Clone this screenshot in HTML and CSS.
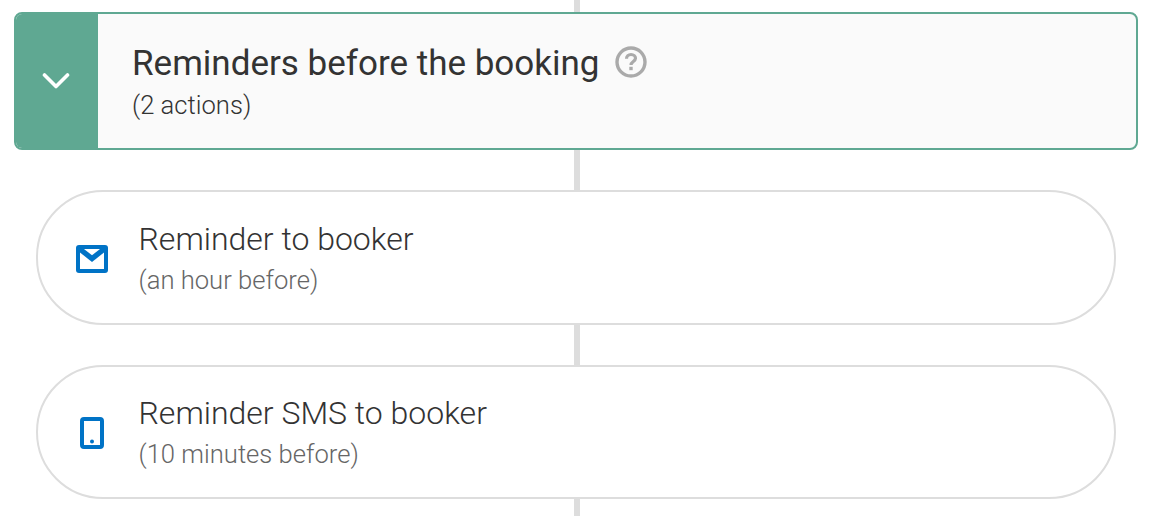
FILE: index.html
```html
<!DOCTYPE html>
<html lang="en">
<head>
<meta charset="utf-8">
<title>Reminders before the booking</title>
<link rel="stylesheet" href="styles.css">
</head>
<body>
<main class="flow">
  <div class="connector connector-top"></div>
  <section class="group">
    <div class="group-toggle">
      <svg class="chevron" width="28" height="18" viewBox="0 0 28 18"><path d="M2.500 3 L14 14.500 L25.500 3" fill="none" stroke="#fff" stroke-width="3.600" stroke-linecap="round" stroke-linejoin="round"/></svg>
    </div>
    <div class="group-text">
      <div class="group-title">
        <span>Reminders before the booking</span>
        <svg class="help" width="34" height="34" viewBox="0 0 34 34"><circle cx="17" cy="17" r="14" fill="none" stroke="#aaa" stroke-width="3.400"/><path d="M12.500 13.800 C12.500 11 14.500 9.500 17 9.500 C19.700 9.500 21.500 11.200 21.500 13.300 C21.500 16.500 17 16.500 17 20" fill="none" stroke="#aaa" stroke-width="3.200"/><rect x="15.300" y="21.800" width="3.400" height="3.400" fill="#aaa"/></svg>
      </div>
      <div class="group-sub">(2 actions)</div>
    </div>
  </section>
  <div class="connector"></div>
  <section class="pill">
    <svg class="pill-icon" width="32" height="28" viewBox="0 0 32 28"><rect x="0" y="0" width="32" height="28" rx="3" fill="#0073c6"/><rect x="4" y="4" width="24" height="20" fill="#fff"/><path d="M4 4 H28 V7.500 L16 17 L4 7.500 Z" fill="#0073c6"/><path d="M8 4 H24 L16 10.300 Z" fill="#fff"/></svg>
    <div class="pill-text">
      <div class="pill-title">Reminder to booker</div>
      <div class="pill-sub">(an hour before)</div>
    </div>
  </section>
  <div class="connector"></div>
  <section class="pill">
    <svg class="pill-icon" width="32" height="32" viewBox="0 0 32 32"><rect x="6" y="2" width="20" height="28" rx="2" fill="none" stroke="#0073c6" stroke-width="4"/><circle cx="16" cy="24.500" r="2" fill="#0073c6"/></svg>
    <div class="pill-text">
      <div class="pill-title">Reminder SMS to booker</div>
      <div class="pill-sub">(10 minutes before)</div>
    </div>
  </section>
  <div class="connector connector-end"></div>
</main>
</body>
</html>
```
FILE: styles.css
```css
* { box-sizing: border-box; }
html, body { margin: 0; padding: 0; background: #fff; }
body { width: 1150px; height: 516px; overflow: hidden; font-family: Roboto, "Liberation Sans", sans-serif; color: #333; }
.flow { display: flex; flex-direction: column; align-items: center; width: 1152px; }
.connector { width: 6px; height: 40px; background: #ddd; flex: none; margin-left: 2px; }
.connector-top { height: 12px; }
.connector-end { height: 17px; }
.group { width: 1124px; height: 138px; display: flex; background: #fafafa; border: 2px solid #5fa892; border-radius: 8px; overflow: hidden; flex: none; }
.group-toggle { width: 84px; flex: none; background: #5fa892; margin: -2px 0 -2px -2px; display: flex; align-items: center; justify-content: center; }
.group-text { padding: 28px 0 0 34px; }
.group-title { display: flex; align-items: center; gap: 15px; font-size: 35px; line-height: 44px; color: #333; }
.help { margin-top: -4px; }
.group-sub { font-size: 25.6px; font-weight: 300; line-height: 34px; margin-top: 2px; color: #333; }
.pill { width: 1080px; height: 134.5px; display: flex; align-items: center; background: #fff; border: 2px solid #ddd; border-radius: 67px; padding-left: 38px; flex: none; }
.pill-icon { flex: none; margin-top: 3px; }
.pill-text { margin-left: 30.5px; margin-top: -1px; }
.pill-title { font-size: 32px; font-weight: 300; line-height: 44px; color: #333; }
.pill-sub { font-size: 25.6px; font-weight: 300; line-height: 34px; margin-top: 2px; color: #666; }
```
